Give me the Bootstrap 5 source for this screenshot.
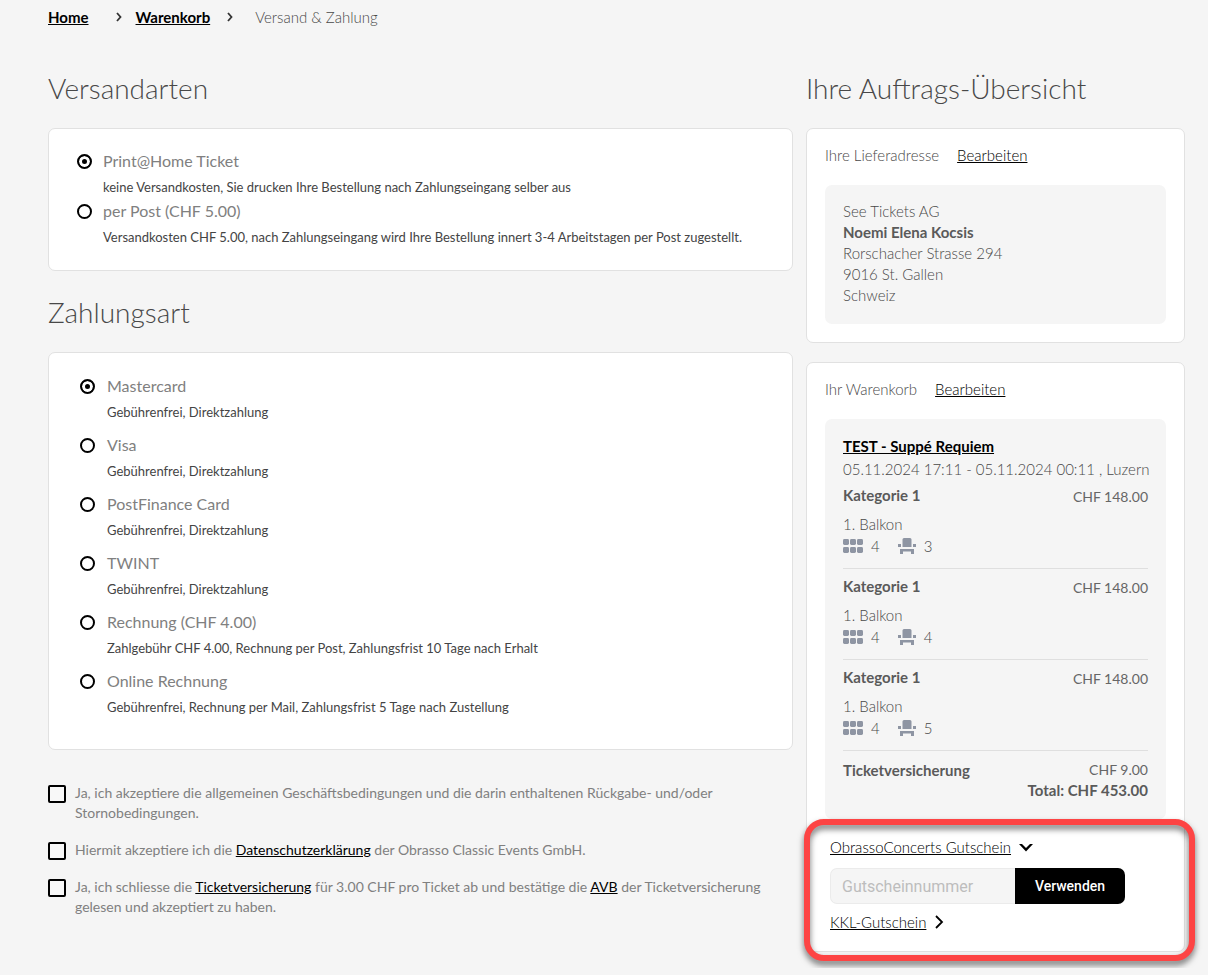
<!DOCTYPE html>
<html lang="de">
<head>
<meta charset="utf-8">
<meta name="viewport" content="width=device-width, initial-scale=1">
<title>Versand &amp; Zahlung</title>
<link href="https://cdn.jsdelivr.net/npm/bootstrap@5.3.0/dist/css/bootstrap.min.css" rel="stylesheet">
<style>
  body { background: #f5f5f5; color: #484848; font: 300 15px/20px Lato, "Liberation Sans", sans-serif; }
  a { color: #000; }
  b { font-weight: 700; color: #5a5a5a; }
  .page { padding: 7px 23px 16px 48px; }
  .trail { margin-bottom: 44px; }
  .trail a { font-weight: 700; }
  .trail svg { margin: 0 13px 0 26px; }
  .trail svg.near { margin: 0 21px 0 16px; }
  .main-col { padding-right: 13px; }
  .title { font-size: 28px; font-weight: 300; line-height: 34px; margin: 0 0 23px; }
  .title.next { margin-top: 24px; }
  .panel { background: #fff; border: 1px solid #e1e1e1; border-radius: 7px; }
  .shipping { padding: 19px 28px 22px; }
  .payment { padding: 20px 31px 31px; }
  .payment .choice + .choice { margin-top: 9px; }
  .choice { gap: 12px; font-weight: 400; }
  .choice label { font-size: 16px; line-height: 26px; color: #808080; }
  .choice small { display: block; margin-top: 2px; font-size: 13px; line-height: 22px; color: #444; }
  .dot { appearance: none; flex: none; width: 15px; height: 15px; margin: 6px 0 0; border: 2px solid #000; border-radius: 50%; background: #fff; }
  .dot:checked { background: #000; box-shadow: inset 0 0 0 3px #fff; }
  .shipping .choice { gap: 11px; }
  .consents { margin-top: 33px; color: #808080; gap: 17px; font-size: 14px; font-weight: 400; }
  .consent { gap: 9px; padding-right: 16px; }
  .tick { appearance: none; flex: none; width: 18px; height: 18px; margin: 2px 0 0; border: 2px solid #000; border-radius: 2px; background: #f8f8f8; }
  .side { padding: 16px 18px 18px; }
  .side + .side { margin-top: 19px; }
  .side-head { gap: 18px; margin-bottom: 20px; }
  .well { background: #f5f5f5; border-radius: 7px; padding: 16px 18px 18px; }
  address { line-height: 21px; }
  .event { font-weight: 700; line-height: 22px; }
  .date { line-height: 24px; }
  .ticket { padding: 7px 0 12px; border-bottom: 1px solid #dfdfdf; }
  .ticket.first { padding-top: 4px; }
  .price { padding-top: 2px; }
  .block { margin: 7px 0 2px; }
  .amount { font-size: 14px; font-weight: 400; color: #666; }
  .seat svg { margin-right: 8px; }
  .seat svg + span { margin-right: 18px; }
  .sum { padding: 9px 0 1px; }
  .voucher { padding: 18px 5px 1px; }
  .redeem { margin: 11px 0 8px; }
  .redeem input { flex: 0 1 185px; min-width: 0; height: 36px; padding: 0 11px; background: #f5f5f5; border: 1px solid #ebebeb; border-right: 0; border-radius: 7px 0 0 7px; font: 400 16px Roboto, sans-serif; }
  .redeem input::placeholder { color: #bdbdbd; opacity: 1; }
  .redeem button { flex: none; width: 110px; height: 36px; border: 0; border-radius: 0 7px 7px 0; background: #000; color: #fff; font: 500 14px Roboto, sans-serif; }
  .frame { inset: 0 -29px -28px -21px; border: 6px solid #fd4444; border-radius: 20px; pointer-events: none; filter: drop-shadow(0 4px 3px rgba(0,0,0,.55)); }
</style>
</head>
<body>
<svg class="d-none" aria-hidden="true">
  <symbol id="rows" viewBox="0 0 20 16"><g fill="#8e95a3"><rect y="1" width="6" height="6" rx="1.4"/><rect x="7" y="1" width="6" height="6" rx="1.4"/><rect x="14" y="1" width="6" height="6" rx="1.4"/><rect y="9" width="6" height="6" rx="1.4"/><rect x="7" y="9" width="6" height="6" rx="1.4"/><rect x="14" y="9" width="6" height="6" rx="1.4"/></g></symbol>
  <symbol id="chair" viewBox="0 0 18 16"><path fill="#8e95a3" d="M6 0h6a1.500 1.500 0 0 1 1.500 1.500V9h-9V1.500A1.500 1.500 0 0 1 6 0ZM0 6h3v3H0ZM15 6h3v3h-3ZM2 11h14v5h-3v-2.500H5V16H2Z"/></symbol>
  <symbol id="crumb" viewBox="0 0 8 10"><path d="M2 1l3.500 4L2 9" fill="none" stroke="#333" stroke-width="1.800"/></symbol>
</svg>
<div class="container-fluid page">
  <nav class="trail d-flex align-items-center" aria-label="Breadcrumb">
    <a href="#">Home</a>
    <svg width="8" height="10"><use href="#crumb"/></svg>
    <a href="#">Warenkorb</a>
    <svg class="near" width="8" height="10"><use href="#crumb"/></svg>
    <span>Versand &amp; Zahlung</span>
  </nav>
  <div class="row g-0">
    <main class="col-8 main-col">
      <h1 class="title">Versandarten</h1>
      <section class="panel shipping">
        <div class="choice d-flex"><input class="dot" type="radio" name="ship" id="s1" checked><div><label for="s1">Print@Home Ticket</label><small>keine Versandkosten, Sie drucken Ihre Bestellung nach Zahlungseingang selber aus</small></div></div>
        <div class="choice d-flex"><input class="dot" type="radio" name="ship" id="s2"><div><label for="s2">per Post (CHF 5.00)</label><small>Versandkosten CHF 5.00, nach Zahlungseingang wird Ihre Bestellung innert 3-4 Arbeitstagen per Post zugestellt.</small></div></div>
      </section>
      <h1 class="title next">Zahlungsart</h1>
      <section class="panel payment">
        <div class="choice d-flex"><input class="dot" type="radio" name="pay" id="p1" checked><div><label for="p1">Mastercard</label><small>Gebührenfrei, Direktzahlung</small></div></div>
        <div class="choice d-flex"><input class="dot" type="radio" name="pay" id="p2"><div><label for="p2">Visa</label><small>Gebührenfrei, Direktzahlung</small></div></div>
        <div class="choice d-flex"><input class="dot" type="radio" name="pay" id="p3"><div><label for="p3">PostFinance Card</label><small>Gebührenfrei, Direktzahlung</small></div></div>
        <div class="choice d-flex"><input class="dot" type="radio" name="pay" id="p4"><div><label for="p4">TWINT</label><small>Gebührenfrei, Direktzahlung</small></div></div>
        <div class="choice d-flex"><input class="dot" type="radio" name="pay" id="p5"><div><label for="p5">Rechnung (CHF 4.00)</label><small>Zahlgebühr CHF 4.00, Rechnung per Post, Zahlungsfrist 10 Tage nach Erhalt</small></div></div>
        <div class="choice d-flex"><input class="dot" type="radio" name="pay" id="p6"><div><label for="p6">Online Rechnung</label><small>Gebührenfrei, Rechnung per Mail, Zahlungsfrist 5 Tage nach Zustellung</small></div></div>
      </section>
      <section class="consents d-flex flex-column">
        <div class="consent d-flex"><input class="tick" type="checkbox" id="c1"><label for="c1">Ja, ich akzeptiere die allgemeinen Geschäftsbedingungen und die darin enthaltenen Rückgabe- und/oder Stornobedingungen.</label></div>
        <div class="consent d-flex"><input class="tick" type="checkbox" id="c2"><label for="c2">Hiermit akzeptiere ich die <a href="#">Datenschutzerklärung</a> der Obrasso Classic Events GmbH.</label></div>
        <div class="consent d-flex"><input class="tick" type="checkbox" id="c3"><label for="c3">Ja, ich schliesse die <a href="#">Ticketversicherung</a> für 3.00 CHF pro Ticket ab und bestätige die <a href="#">AVB</a> der Ticketversicherung gelesen und akzeptiert zu haben.</label></div>
      </section>
    </main>
    <aside class="col-4">
      <h1 class="title">Ihre Auftrags-Übersicht</h1>
      <section class="panel side">
        <div class="side-head d-flex"><span>Ihre Lieferadresse</span><a href="#">Bearbeiten</a></div>
        <address class="well mb-0">See Tickets AG<br><b>Noemi Elena Kocsis</b><br>Rorschacher Strasse 294<br>9016 St. Gallen<br>Schweiz</address>
      </section>
      <section class="panel side">
        <div class="side-head d-flex"><span>Ihr Warenkorb</span><a href="#">Bearbeiten</a></div>
        <div class="well">
          <div class="event"><a href="#">TEST - Suppé Requiem</a></div>
          <div class="date text-nowrap">05.11.2024 17:11 - 05.11.2024 00:11 , Luzern</div>
          <div class="ticket first">
            <div class="d-flex justify-content-between"><b>Kategorie 1</b><span class="amount price">CHF 148.00</span></div>
            <div class="block">1. Balkon</div>
            <div class="seat d-flex align-items-center"><svg width="20" height="16"><use href="#rows"/></svg><span>4</span><svg width="18" height="16"><use href="#chair"/></svg><span>3</span></div>
          </div>
          <div class="ticket">
            <div class="d-flex justify-content-between"><b>Kategorie 1</b><span class="amount price">CHF 148.00</span></div>
            <div class="block">1. Balkon</div>
            <div class="seat d-flex align-items-center"><svg width="20" height="16"><use href="#rows"/></svg><span>4</span><svg width="18" height="16"><use href="#chair"/></svg><span>4</span></div>
          </div>
          <div class="ticket">
            <div class="d-flex justify-content-between"><b>Kategorie 1</b><span class="amount price">CHF 148.00</span></div>
            <div class="block">1. Balkon</div>
            <div class="seat d-flex align-items-center"><svg width="20" height="16"><use href="#rows"/></svg><span>4</span><svg width="18" height="16"><use href="#chair"/></svg><span>5</span></div>
          </div>
          <div class="sum">
            <div class="d-flex justify-content-between"><b>Ticketversicherung</b><span class="amount">CHF 9.00</span></div>
            <div class="text-end"><b>Total: CHF 453.00</b></div>
          </div>
        </div>
        <div class="voucher position-relative">
          <div class="d-flex align-items-center gap-2"><a href="#">ObrassoConcerts Gutschein</a><svg width="14" height="9" viewBox="0 0 14 9"><path d="M0 1h3l4 4 4-4h3L7 8.500Z"/></svg></div>
          <form class="redeem d-flex"><input type="text" placeholder="Gutscheinnummer" aria-label="Gutscheinnummer"><button type="button">Verwenden</button></form>
          <div class="d-flex align-items-center gap-2"><a href="#">KKL-Gutschein</a><svg width="10" height="14" viewBox="0 0 10 14"><path d="M2 1l6 6-6 6" fill="none" stroke="#000" stroke-width="1.800"/></svg></div>
          <div class="frame position-absolute"></div>
        </div>
      </section>
    </aside>
  </div>
</div>
<script src="https://cdn.jsdelivr.net/npm/bootstrap@5.3.0/dist/js/bootstrap.bundle.min.js"></script>
</body>
</html>
